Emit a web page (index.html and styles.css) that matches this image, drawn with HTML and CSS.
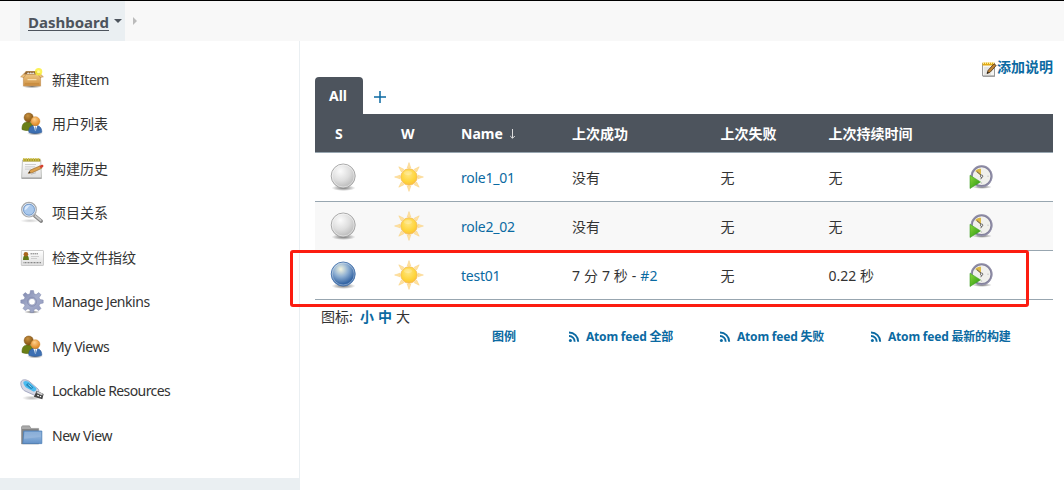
FILE: index.html
```html
<!DOCTYPE html>
<html lang="zh-CN">
<head>
<meta charset="utf-8">
<title>Dashboard [Jenkins]</title>
<link rel="stylesheet" href="styles.css">
</head>
<body>
<svg class="sprite" aria-hidden="true">
  <defs>
    <radialGradient id="gGrey" cx=".38" cy=".3" r=".72"><stop offset="0" stop-color="#fbfbfb"/><stop offset=".55" stop-color="#dedede"/><stop offset="1" stop-color="#b8b8b8"/></radialGradient>
    <radialGradient id="gBlue" cx=".4" cy=".3" r=".68"><stop offset="0" stop-color="#f4f5df"/><stop offset=".45" stop-color="#8fb0d3"/><stop offset=".9" stop-color="#3465a4"/><stop offset="1" stop-color="#3465a4"/></radialGradient>
    <radialGradient id="gShadow"><stop offset="0" stop-color="#000" stop-opacity=".55"/><stop offset="1" stop-color="#000" stop-opacity="0"/></radialGradient>
    <radialGradient id="gSun" cx=".45" cy=".35" r=".65"><stop offset="0" stop-color="#ffe680"/><stop offset=".7" stop-color="#fed43a"/><stop offset="1" stop-color="#fbbf3c"/></radialGradient>
    <radialGradient id="gHeadB" cx=".4" cy=".3" r=".7"><stop offset="0" stop-color="#c89140"/><stop offset="1" stop-color="#805010"/></radialGradient>
    <radialGradient id="gHeadO" cx=".4" cy=".3" r=".7"><stop offset="0" stop-color="#ffd08a"/><stop offset="1" stop-color="#dd8420"/></radialGradient>
    <linearGradient id="gBox" x2="0" y2="1"><stop offset="0" stop-color="#edc583"/><stop offset="1" stop-color="#cc8e40"/></linearGradient>
    <linearGradient id="gPaper" x2="0" y2="1"><stop offset="0" stop-color="#fff"/><stop offset="1" stop-color="#dedede"/></linearGradient>
    <linearGradient id="gFolder" x2="0" y2="1"><stop offset="0" stop-color="#78a2d2"/><stop offset=".5" stop-color="#86acd7"/><stop offset="1" stop-color="#6291c8"/></linearGradient>
    <linearGradient id="gGear" x2="1" y2="1"><stop offset="0" stop-color="#7a83ab"/><stop offset=".5" stop-color="#a5adcb"/><stop offset="1" stop-color="#8f97bd"/></linearGradient>
    <linearGradient id="gPlay" x2="1" y2="1"><stop offset="0" stop-color="#8ad83a"/><stop offset="1" stop-color="#279410"/></linearGradient>
  </defs>
  <symbol id="package" viewBox="0 0 24 24">
    <ellipse cx="12" cy="18.5" rx="10" ry="1.7" fill="url(#gShadow)"/>
    <path d="M3.4 6 6 3h12l2.8 3z" fill="#c49a61"/><path d="M6 3.5h12l2 3H4z" fill="#8f6635"/>
    <path d="M7 6c.5-2 2-2 2.5 0 .5-2 2-2 2.5 0 .5-2 2-2 2.5 0z" fill="#e7e0d4"/>
    <path d="M3.4 6.5h17.2v11.4H3.4z" fill="url(#gBox)" stroke="#c08a48" stroke-width=".6"/>
    <path d="m3.4 6.2-2.8 2.6 3.3.8 2-3zm17.2 0 2.8 2.6-3.3.8-2-3z" fill="#e8bd79" stroke="#b8813f" stroke-width=".5"/>
    <path d="M7.5 11h9v1.2h-9z" fill="#f8dfae"/><path d="M5 15.8h14" stroke="#c08538" stroke-width=".8"/>
    <circle cx="18.6" cy="3.8" r="3.7" fill="#fcf03b" fill-opacity=".85"/><circle cx="18.5" cy="3.8" r="1.5" fill="#fff9a0"/>
  </symbol>
  <symbol id="users" viewBox="0 0 24 24">
    <ellipse cx="15" cy="21.5" rx="8" ry="1.8" fill="url(#gShadow)"/>
    <path d="M2 17.5c-.2-5.5 2-7.6 6-7.6s6 2.6 5.4 7.6c-3 1.4-8.4 1.4-11.4 0z" fill="#6a7f16" stroke="#54660d" stroke-width=".6"/>
    <circle cx="8.7" cy="5.6" r="4.6" fill="url(#gHeadB)" stroke="#80551a" stroke-width=".5"/>
    <path d="M8.8 20.3c-.2-5 2-7 6.2-7s6.8 2 6.8 7c-3.2 1.4-9.8 1.4-13 0z" fill="#3d70b3" stroke="#2b5895" stroke-width=".6"/>
    <path d="m13.4 13.7 2 5.3 2-5.3z" fill="#fff"/><path d="m14.9 14.5-.4 3.5.9 1.2.9-1.2-.4-3.5z" fill="#8ba9ce"/>
    <circle cx="15.4" cy="9.2" r="4.5" fill="url(#gHeadO)" stroke="#d08a35" stroke-width=".5"/>
  </symbol>
  <symbol id="notepad" viewBox="0 0 24 24">
    <path d="M2.5 3h18.2l.8 17.8H1.6z" fill="url(#gPaper)" stroke="#b4b6b1" stroke-width=".8"/>
    <path d="M1.5 20.6h20.2V22H1.5z" fill="#a9a9a9"/>
    <path d="M3 1.7h17.3v2.9H3z" fill="#a3962a"/><path d="M3.8 1v3M6.2 1v3M8.6 1v3M11 1v3M13.4 1v3M15.8 1v3M18.2 1v3" stroke="#d0c148" stroke-width="1.2"/>
    <path d="M5 7.5h11M5 9.8h10M5 12.1h6" stroke="#c4c4c4" stroke-width=".8"/>
    <path d="m8.3 16.3 2-3.2L20 8.9l1.6 2.4-9.5 4.5z" fill="#dda04c" stroke="#9a6a2b" stroke-width=".7"/><path d="m8.3 16.3 1.2-2 1 1.6z" fill="#333"/><path d="m19.4 9 2.4-1.2c1.4-.4 2.4 1.6 1 2.4l-1.9 1.1z" fill="#d4402f"/><path d="m11 17.2 5-1.5" stroke="#bbb"/>
  </symbol>
  <symbol id="search" viewBox="0 0 24 24">
    <ellipse cx="10" cy="19.8" rx="10" ry="2" fill="url(#gShadow)" opacity=".35"/>
    <path d="m14.8 14.8 6.4 5.4" stroke="#868686" stroke-width="3.6" stroke-linecap="round"/><path d="m14.8 14.5 6.4 5.2" stroke="#c9c9c9" stroke-width="1.8"/>
    <circle cx="9" cy="8.7" r="7.3" fill="#a3bfe4" stroke="#aaa" stroke-width="1.2"/><circle cx="9" cy="8.7" r="6.2" fill="#aac9ed" stroke="#eee" stroke-width="1"/><circle cx="9" cy="8.7" r="5.5" fill="none" stroke="#638dc2" stroke-width=".8"/><path d="M4.7 9.5C4.4 5 7 4 10.5 4.3 7.5 6 8 8 4.7 9.5z" fill="#dceafb"/>
  </symbol>
  <symbol id="card" viewBox="0 0 24 24">
    <rect x="1.3" y="4.5" width="22.2" height="15" rx=".6" fill="url(#gPaper)" stroke="#c0c0c0" stroke-width=".8"/>
    <path d="M3 14c0-3.8 1.1-4.8 2.9-4.8s3 1 3 4.8z" fill="#617817"/><circle cx="5.9" cy="8.2" r="2.3" fill="#a9651d"/>
    <path d="M10.5 7.8h8" stroke="#777" stroke-dasharray="1.5 .5"/><path d="M11 10.5h8M11 12.5h6" stroke="#c4c4c4" stroke-width=".8"/><path d="M3.5 16.6h18" stroke="#888" stroke-width="1.2" stroke-dasharray="1 .5"/>
  </symbol>
  <symbol id="gear" viewBox="0 0 24 24">
    <ellipse cx="12" cy="22" rx="8" ry="1.7" fill="url(#gShadow)"/>
    <path fill-rule="evenodd" d="m10.5.6 3 0 .6 3.2 2 .8 2.7-2L21 4.8l-1.9 2.7.9 2 3.2.6v3l-3.2.6-.9 2 1.9 2.7-2.2 2.2-2.7-1.9-2 .8-.6 3.1h-3l-.6-3.1-2-.8-2.7 1.9L3 18.4l1.9-2.7-.9-2-3.2-.6v-3L4 9.5l.9-2L3 4.8l2.2-2.2 2.7 2 2-.8zM12 8.4a3.3 3.3 0 1 0 0 6.6 3.3 3.3 0 0 0 0-6.6z" fill="url(#gGear)" stroke="#8088ac" stroke-width=".5"/><circle cx="12" cy="11.7" r="4.5" fill="none" stroke="#8188ac" stroke-width=".7"/>
  </symbol>
  <symbol id="usb" viewBox="0 0 24 24">
    <ellipse cx="12" cy="19" rx="10" ry="2.5" fill="url(#gShadow)" opacity=".5"/>
    <path d="M.8 4.3C.8.4 5-.2 9 2.2l9.3 8.1c1.7 2-.7 6.7-3.7 6L4.3 11.7C2.2 10 .8 7.3.8 4.3z" fill="#d5d8e5" stroke="#979bb8" stroke-width=".8"/>
    <path d="M3.8 2.5c2-1.2 4.8-.2 6.3 1.4l6.3 5.4c.3 1.9-1.2 3.4-3 3.1L6 8.4C4.1 6.5 2.6 3.8 3.8 2.5z" fill="#4cbcf0"/><path d="m8 4 5.4 4.6-2.3 1.7L5.8 6z" fill="#2287bb"/><path d="m8.3 5.6 3.3 2.9" stroke="#94daf5"/>
    <path d="m16.7 11.8 6.9 3.1-1.3 5.4-8.4-2.5z" fill="#444"/><path d="m17.4 12.3 5.4 2.5-.5 1.6-5.8-2.3z" fill="#ccc"/><path d="m17.3 16.3 1.5.6m1 .4 1.3.5" stroke="#fff" stroke-width="1.2"/>
  </symbol>
  <symbol id="folder" viewBox="0 0 24 24">
    <path d="M1.5 20V2.7l1-.9h7l1.5 2.6h7.7V20z" fill="#848484" stroke="#777" stroke-width=".4"/><path d="M2 5V2.3h7.5L11 5h7.3" fill="#aaa"/>
    <path d="M3.8 7h18v12.6H2.8z" fill="url(#gFolder)" stroke="#4b7fb8" stroke-width=".8"/><path d="M4.5 7.8h16.6v5L4.2 15z" fill="#fff" opacity=".12"/>
  </symbol>
  <symbol id="grey" viewBox="0 0 28 30"><ellipse cx="14.5" cy="26" rx="12" ry="3" fill="url(#gShadow)"/><circle cx="14.2" cy="14" r="12" fill="url(#gGrey)" stroke="#a2a2a2" stroke-width=".9"/><circle cx="14.2" cy="14" r="11" fill="none" stroke="#fff" stroke-opacity=".45"/></symbol>
  <symbol id="blue" viewBox="0 0 28 30"><ellipse cx="14.5" cy="26" rx="12" ry="3" fill="url(#gShadow)"/><circle cx="14.2" cy="14" r="12" fill="url(#gBlue)" stroke="#4774ad" stroke-width=".9"/><circle cx="14.2" cy="14" r="11" fill="none" stroke="#fff" stroke-opacity=".35"/></symbol>
  <symbol id="sun" viewBox="0 0 30 30">
    <g fill="#ffe2a2" stroke="#f8cf7b" stroke-width=".5"><path id="rays" d="m13.2 6 1.8-5.4L16.8 6zm0 18 1.8 5.4 1.8-5.4zM6 13.2.6 15 6 16.8zm18 0 5.4 1.8-5.4 1.8z"/><use href="#rays" transform="rotate(45 15 15)"/></g>
    <circle cx="15" cy="15" r="8.2" fill="url(#gSun)" stroke="#f4bb58" stroke-width=".8"/><ellipse cx="14" cy="11" rx="4" ry="2" fill="#fff" opacity=".2"/>
  </symbol>
  <symbol id="schedule" viewBox="0 0 24 24">
    <ellipse cx="13" cy="22" rx="10" ry="1.9" fill="url(#gShadow)"/>
    <circle cx="12.6" cy="11.2" r="9.9" fill="#f0f0ec" stroke="#83819c" stroke-width="2.1"/><circle cx="12.6" cy="11.2" r="10.6" fill="none" stroke="#aaa9bc" stroke-width=".5"/>
    <path d="M12 10.8 6.2 6c1.4-1.7 3.5-2.3 5.8-2.3z" fill="#dbb847"/><path d="m7.8 6.6 5.5 4.6-1.5 3" fill="none" stroke="#555" stroke-width=".9"/><circle cx="12.6" cy="11.2" r="1.2" fill="#fff" stroke="#222" stroke-width=".6"/><path d="M18.5 11.2h1M12.6 17.5v1" stroke="#999" stroke-width=".8"/>
    <path d="M1 10.3v13.2l10.5-6.6z" fill="url(#gPlay)" stroke="#3d9d24" stroke-width=".6"/>
  </symbol>
  <symbol id="edit" viewBox="0 0 16 16">
    <path d="M1.5 2.5h12v12.5h-12z" fill="#f5f5f2" stroke="#9a9a9a"/><path d="M2 15.3h12" stroke="#888" stroke-width=".8"/>
    <path d="M1.5 1.5h12v3h-12z" fill="#e2aa13"/><path d="M2.5 1v2M4.5 1v2M6.5 1v2M8.5 1v2M10.5 1v2M12.5 1v2" stroke="#fff3a6" stroke-width=".9"/>
    <path d="M3 7h7M3 9h4M3 11h3M3 13h7" stroke="#ccc" stroke-width=".8"/><path d="m6 12.6 1.2-3.4L13 2.8l2.2 1.7-6.1 6.8z" fill="#c18432" stroke="#49321b" stroke-width=".8"/><path d="m6 12.6.7-2 1.2 1.1z" fill="#111"/>
  </symbol>
  <symbol id="rss" viewBox="0 0 12 12"><circle cx="2.4" cy="9.4" r="1.5" fill="currentColor"/><path d="M1 5a5.7 5.7 0 0 1 5.7 5.7M1 1.5a9.2 9.2 0 0 1 9.2 9.2" fill="none" stroke="currentColor" stroke-width="1.9"/></symbol>
</svg>

<header class="breadcrumbs">
  <a class="crumb"><span class="crumb-text">Dashboard</span><svg class="caret" viewBox="0 0 8 4"><path d="M0 0h8L4 4z"/></svg></a>
  <svg class="crumb-next" viewBox="0 0 4 8"><path d="M0 0v8l4-4z"/></svg>
</header>
<div class="page">
  <aside class="side">
    <nav class="tasks">
      <a class="task"><svg class="task-icon"><use href="#package"/></svg><span>新建<span class="tight">Item</span></span></a>
      <a class="task"><svg class="task-icon"><use href="#users"/></svg><span>用户列表</span></a>
      <a class="task"><svg class="task-icon"><use href="#notepad"/></svg><span>构建历史</span></a>
      <a class="task"><svg class="task-icon"><use href="#search"/></svg><span>项目关系</span></a>
      <a class="task"><svg class="task-icon"><use href="#card"/></svg><span>检查文件指纹</span></a>
      <a class="task"><svg class="task-icon"><use href="#gear"/></svg><span class="tight">Manage Jenkins</span></a>
      <a class="task"><svg class="task-icon"><use href="#users"/></svg><span class="tight">My Views</span></a>
      <a class="task"><svg class="task-icon"><use href="#usb"/></svg><span class="tighter">Lockable Resources</span></a>
      <a class="task"><svg class="task-icon"><use href="#folder"/></svg><span class="tight">New View</span></a>
    </nav>
    <div class="side-pane"></div>
  </aside>
  <main class="main">
    <div class="description"><svg class="edit-icon"><use href="#edit"/></svg><a class="link strong">添加说明</a></div>
    <div class="tabs"><a class="tab">All</a><a class="tab-add"><svg viewBox="0 0 12 12"><path d="M6 0v12M0 6h12"/></svg></a></div>
    <div class="jobs">
      <div class="row head"><span class="s">S</span><span class="w">W</span><span>Name <svg class="sort" viewBox="0 0 7 10"><path d="M3.5 0v9M1.2 7l2.3 2.3L5.8 7"/></svg></span><span>上次成功</span><span>上次失败</span><span>上次持续时间</span><span></span></div>
      <div class="row"><svg class="ball"><use href="#grey"/></svg><svg class="weather"><use href="#sun"/></svg><a class="link name">role1_01</a><span>没有</span><span>无</span><span>无</span><svg class="build"><use href="#schedule"/></svg></div>
      <div class="row alt"><svg class="ball"><use href="#grey"/></svg><svg class="weather"><use href="#sun"/></svg><a class="link name">role2_02</a><span>没有</span><span>无</span><span>无</span><svg class="build"><use href="#schedule"/></svg></div>
      <div class="row"><svg class="ball"><use href="#blue"/></svg><svg class="weather"><use href="#sun"/></svg><a class="link name">test01</a><span class="ago">7 分 7 秒 - <a class="link">#2</a></span><span>无</span><span>0.22 秒</span><svg class="build"><use href="#schedule"/></svg></div>
      <div class="highlight"></div>
    </div>
    <div class="sizes"><span class="sizes-label">图标:</span><a class="link strong">小</a><a class="link strong">中</a><span>大</span></div>
    <div class="feeds">
      <a class="legend">图例</a>
      <a class="feed"><svg class="rss"><use href="#rss"/></svg>Atom feed 全部</a>
      <a class="feed"><svg class="rss"><use href="#rss"/></svg>Atom feed 失败</a>
      <a class="feed"><svg class="rss"><use href="#rss"/></svg>Atom feed 最新的构建</a>
    </div>
  </main>
</div>
</body>
</html>
```
FILE: styles.css
```css
* { box-sizing: border-box; }
body {
  margin: 0;
  height: 490px;
  overflow: hidden;
  background: #fff;
  color: #333;
  font: 14px/20px "Noto Sans", "Noto Sans CJK SC", sans-serif;
}
svg { display: block; flex: none; }
.sprite { position: absolute; width: 0; height: 0; }
.breadcrumbs {
  display: flex;
  align-items: center;
  height: 41px;
  padding-left: 20px;
  border-top: 1px solid #000;
  background: #f8f8f8;
}
.crumb {
  display: flex;
  align-items: center;
  width: 105px;
  height: 40px;
  padding-left: 8px;
  background: #eaeff2;
  color: #4d545d;
  font-weight: 700;
  font-size: 15px;
}
.crumb-text {
  width: 82px;
  padding-top: 2px;
  text-decoration: underline;
  text-decoration-skip-ink: none;
  text-underline-offset: 2px;
  white-space: nowrap;
}
.caret { width: 8px; height: 4px; margin-left: 4px; fill: #4d545d; }
.crumb-next { width: 4px; height: 8px; margin-left: 8px; fill: #bbb; }
.page { display: flex; height: 449px; }
.side { width: 300px; flex: none; border-right: 1px solid #eaeff2; }
.tasks { height: 437px; padding-top: 16.5px; }
.task { display: flex; align-items: center; gap: 8px; height: 44.5px; padding-left: 20px; white-space: nowrap; }
.tight { letter-spacing: -.45px; }
.tighter { letter-spacing: -.6px; }
.task-icon { width: 24px; height: 24px; }
.side-pane { height: 12px; margin-right: -1px; background: #eaeff2; }
.main { width: 753px; flex: none; padding-left: 15px; }
.description { display: flex; justify-content: flex-end; height: 36px; padding-top: 16px; }
.edit-icon { width: 16px; height: 16px; margin-top: 4px; }
.link { color: #0b6aa2; }
.strong { font-weight: 700; }
.tabs { display: flex; align-items: center; height: 37px; }
.tab { width: 48px; height: 37px; padding-left: 14px; line-height: 38px; border-radius: 4px 4px 0 0; background: #4d545d; color: #fff; font-weight: 700; }
.tab-add { width: 12px; margin: 3px 0 0 11px; }
.tab-add svg { width: 12px; height: 12px; stroke: #0b6aa2; stroke-width: 1.5; }
.jobs { position: relative; }
.row {
  display: grid;
  grid-template-columns: 77px 69px 111px 148.5px 108px 140.5px 1fr;
  align-items: center;
  height: 49px;
  border-bottom: 1px solid #98a6b0;
  white-space: nowrap;
}
.row > span, .name { padding-top: 2px; }
.name { letter-spacing: -.25px; }
.ago { letter-spacing: .15px; }
.head { height: 39px; background: #4d545d; color: #fff; font-weight: 700; }
.s { padding-left: 20px; }
.w { padding-left: 9px; }
.sort { display: inline-block; width: 7px; height: 10px; margin-left: 3px; fill: none; stroke: #ddd; stroke-width: 1; }
.alt { background: #f8f8f8; }
.ball { width: 28px; height: 30px; margin-left: 14px; }
.weather { width: 30px; height: 30px; margin-left: 2px; }
.build { width: 24px; height: 24px; }
.highlight {
  position: absolute;
  left: -25px;
  top: 136px;
  width: 739px;
  height: 57px;
  border: 3px solid #fc1c10;
  border-radius: 3px;
}
.sizes { display: flex; gap: 4px; height: 20px; margin-top: 7px; padding-left: 6px; }
.sizes-label { width: 35px; }
.feeds { display: flex; height: 20px; padding-left: 177px; color: #0b6aa2; font-size: 12px; font-weight: 700; white-space: nowrap; }
.legend { width: 76px; }
.feed { display: flex; align-items: center; gap: 6px; width: 151px; letter-spacing: -.2px; }
.rss { width: 12px; height: 12px; }
```
